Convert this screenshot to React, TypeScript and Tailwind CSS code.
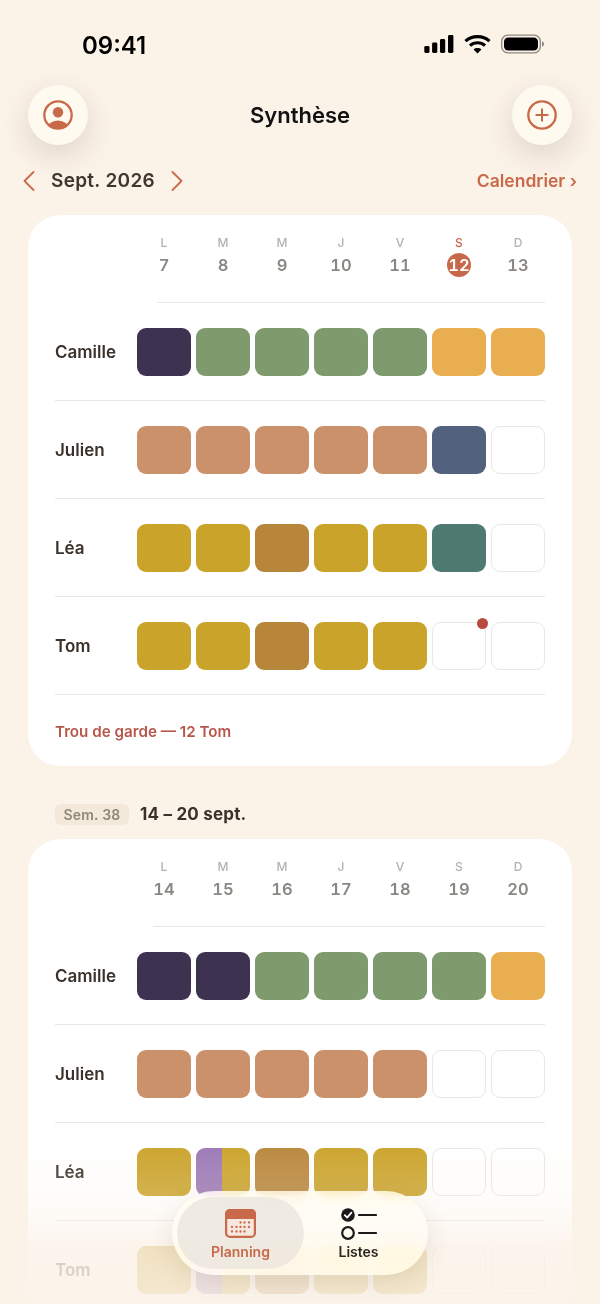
import React from "react";

type Slot = string | null;

const NAVY = "bg-[#3d3350]";
const GREEN = "bg-[#7f9a6c]";
const AMBER = "bg-[#e8ae4f]";
const TAN = "bg-[#cb916b]";
const SLATE = "bg-[#52617e]";
const GOLD = "bg-[#caa32a]";
const BROWN = "bg-[#b8863a]";
const TEAL = "bg-[#4e7a72]";

const font = { fontFamily: 'Inter, "Liberation Sans", sans-serif' };

type Row = { name: string; cells: (Slot | "split")[]; alert?: number };

const firstWeek: Row[] = [
  { name: "Camille", cells: [NAVY, GREEN, GREEN, GREEN, GREEN, AMBER, AMBER] },
  { name: "Julien", cells: [TAN, TAN, TAN, TAN, TAN, SLATE, null] },
  { name: "Léa", cells: [GOLD, GOLD, BROWN, GOLD, GOLD, TEAL, null] },
  { name: "Tom", cells: [GOLD, GOLD, BROWN, GOLD, GOLD, null, null], alert: 5 },
];

const secondWeek: Row[] = [
  { name: "Camille", cells: [NAVY, NAVY, GREEN, GREEN, GREEN, GREEN, AMBER] },
  { name: "Julien", cells: [TAN, TAN, TAN, TAN, TAN, null, null] },
  { name: "Léa", cells: [GOLD, "split", BROWN, GOLD, GOLD, null, null] },
  { name: "Tom", cells: [GOLD, "split", BROWN, GOLD, GOLD, null, null] },
];

const letters = ["L", "M", "M", "J", "V", "S", "D"];

function DayHeader({ start, today, rule }: { start: number; today?: number; rule: string }) {
  return (
    <div>
      <div className="ml-[82px] grid grid-cols-7 gap-[5px] pt-[21px]">
        {letters.map((l, i) => {
          const n = start + i;
          const isToday = n === today;
          return (
            <div key={i} className="flex flex-col items-center">
              <span className={`h-[14px] text-[12px] leading-[14px] font-medium ${isToday ? "text-[#c8684a]" : "text-[#b5b2ae]"}`}>{l}</span>
              <span className={`mt-[3px] flex h-[24px] w-[24px] items-center justify-center rounded-full text-[16.5px] leading-none font-semibold tabular-nums ${isToday ? "bg-[#c8684a] text-white" : "text-[#8b8884]"}`}>{n}</span>
            </div>
          );
        })}
      </div>
      <div className={`mt-[25px] h-px bg-[#e9e8e6] ${rule}`} />
    </div>
  );
}

function Cell({ value, alert }: { value: Slot | "split"; alert?: boolean }) {
  if (value === "split") {
    return (
      <div className="flex h-[48px] overflow-hidden rounded-[9px]">
        <div className="w-[26px] bg-[#9b78b6]" />
        <div className={`flex-1 ${GOLD}`} />
      </div>
    );
  }
  if (!value) {
    return (
      <div className="relative h-[48px] rounded-[9px] border-[1.5px] border-[#e8e7e5] bg-white">
        {alert && <span className="absolute -top-[5px] right-[-3px] h-[11px] w-[11px] rounded-full bg-[#b84c3f]" />}
      </div>
    );
  }
  return <div className={`h-[48px] rounded-[9px] ${value}`} />;
}

function PlanningRow({ row }: { row: Row }) {
  return (
    <div className="border-b border-[#e9e8e6] pt-[25px] pb-[24px]">
      <div className="flex items-center">
        <span className="w-[82px] pt-[2px] text-[17px] font-semibold text-[#3a312a]">{row.name}</span>
        <div className="grid flex-1 grid-cols-7 gap-[5px]">
          {row.cells.map((c, i) => (
            <Cell key={i} value={c} alert={row.alert === i} />
          ))}
        </div>
      </div>
    </div>
  );
}

function ProfileIcon() {
  return (
    <svg width="30" height="30" viewBox="0 0 30 30">
      <defs>
        <clipPath id="ring">
          <circle cx="15" cy="15" r="13.5" />
        </clipPath>
      </defs>
      <circle cx="15" cy="15" r="13.7" fill="none" stroke="#c8694a" strokeWidth="2.3" />
      <circle cx="15" cy="12.3" r="5.2" fill="#c8694a" />
      <ellipse cx="15" cy="29" rx="11" ry="8.6" fill="#c8694a" clipPath="url(#ring)" />
    </svg>
  );
}

function PlusIcon() {
  return (
    <svg width="30" height="30" viewBox="0 0 30 30" fill="none" stroke="#c8694a" strokeWidth="2.3" strokeLinecap="round">
      <circle cx="15" cy="15" r="13.7" />
      <path d="M15 9.3v11.4M9.3 15h11.4" strokeWidth="2" />
    </svg>
  );
}

function Chevron({ flip }: { flip?: boolean }) {
  return (
    <svg width="12" height="20" viewBox="0 0 12 20" fill="none" stroke="#c8694a" strokeWidth="1.8" strokeLinecap="round" strokeLinejoin="round">
      <path d={flip ? "M1.5 1 10.5 10 1.5 19" : "M10.5 1 1.5 10 10.5 19"} />
    </svg>
  );
}

function StatusIcons() {
  return (
    <div className="flex items-center">
      <svg width="30" height="20" viewBox="0 0 30 20" fill="#000">
        <rect x="0.3" y="12" width="5.2" height="7" rx="1.4" />
        <rect x="8.1" y="8.5" width="5.2" height="10.5" rx="1.4" />
        <rect x="16" y="5" width="5.2" height="14" rx="1.4" />
        <rect x="24" y="1" width="5.4" height="18" rx="1.4" />
      </svg>
      <svg className="ml-[10px]" width="27" height="20" viewBox="0 0 27 20" fill="none" stroke="#000" strokeWidth="3.2">
        <path d="M1.5 7.2C8 1 19 1 25.5 7.2" />
        <path d="M6 11.6c4.2-3.8 10.8-3.8 15 0" />
        <path d="M13.5 19.5 9.6 15.4c2.2-1.8 5.6-1.8 7.8 0z" fill="#000" stroke="none" />
      </svg>
      <svg className="ml-[10px]" width="43" height="20" viewBox="0 0 43 20">
        <rect x="0.7" y="1.2" width="38.6" height="17.6" rx="6" fill="none" stroke="#8c8780" strokeWidth="1.3" />
        <rect x="3" y="3.4" width="34" height="13.2" rx="4.2" fill="#000" />
        <path d="M41 7.2c1.2.4 2 1.5 2 2.8s-.8 2.4-2 2.8z" fill="#8c8780" />
      </svg>
    </div>
  );
}

function CalendarIcon() {
  return (
    <svg width="31" height="29" viewBox="0 0 31 29">
      <rect x="1.1" y="1.1" width="28.8" height="26.8" rx="4" fill="#f6e8df" stroke="#c8694a" strokeWidth="2.2" />
      <path d="M0 10V5a5 5 0 0 1 5-5h21a5 5 0 0 1 5 5v5z" fill="#c8694a" />
      <g fill="#c8694a">
        {[13.5, 18, 22.5].map((y, r) =>
          [7, 11.5, 15.5, 19.5, 24].map((x, c) =>
            (r === 0 && c < 2) || (r === 2 && c === 4) ? null : <circle key={`${r}-${c}`} cx={x} cy={y} r="1.15" />
          )
        )}
      </g>
    </svg>
  );
}

function ListIcon() {
  return (
    <svg width="36" height="34" viewBox="0 0 36 34" fill="none">
      <circle cx="7" cy="7" r="6.8" fill="#1a1a1a" />
      <path d="M3.8 7.2 6.2 9.6 10.4 4.6" stroke="#fff" strokeWidth="1.8" strokeLinecap="round" strokeLinejoin="round" />
      <circle cx="7" cy="25" r="5.8" stroke="#1a1a1a" strokeWidth="2.2" />
      <path d="M18 7h17M18 25h17" stroke="#1a1a1a" strokeWidth="2.2" strokeLinecap="round" />
    </svg>
  );
}

export default function App() {
  return (
    <div className="relative h-[1304px] w-[600px] overflow-hidden bg-[#fbf2e8]" style={font}>
      <div className="flex h-[85px] items-start justify-between pt-[30px] pr-[56px] pl-[82px]">
        <span className="text-[24px] leading-[32px] font-semibold text-black">09:41</span>
        <div className="pt-[4px]">
          <StatusIcons />
        </div>
      </div>

      <div className="flex items-center justify-between px-7">
        <div className="flex h-[60px] w-[60px] items-center justify-center rounded-full bg-[#fefaf0] shadow-[0_10px_28px_rgba(90,70,50,0.17)]">
          <ProfileIcon />
        </div>
        <span className="text-[22px] font-semibold text-[#111]">Synthèse</span>
        <div className="flex h-[60px] w-[60px] items-center justify-center rounded-full bg-[#fefaf0] shadow-[0_10px_28px_rgba(90,70,50,0.17)]">
          <PlusIcon />
        </div>
      </div>

      <div className="mt-[22px] flex h-[28px] items-center justify-between pr-[23px] pl-[23px]">
        <div className="flex items-center">
          <Chevron />
          <span className="mx-[16px] text-[19px] font-semibold tracking-[0.3px] text-[#3f362e]">Sept. 2026</span>
          <Chevron flip />
        </div>
        <span className="text-[17.5px] font-semibold text-[#c8694a]">Calendrier ›</span>
      </div>

      <section className="mx-7 mt-[20px] h-[551px] rounded-[32px] bg-white px-[27px]">
        <DayHeader start={7} today={12} rule="ml-[102px]" />
        {firstWeek.map((r) => (
          <PlanningRow key={r.name} row={r} />
        ))}
        <p className="mt-[27px] text-[15.2px] leading-[20px] font-semibold text-[#b8564a]">Trou de garde — 12 Tom</p>
      </section>

      <div className="mt-[38px] flex h-[21px] items-center pl-[55px]">
        <span className="flex h-[21px] w-[74px] items-center justify-center rounded-[6px] bg-[#f3e8da] text-[14px] font-semibold tracking-[0.2px] text-[#8f8779]">Sem. 38</span>
        <span className="ml-[11px] text-[17px] font-bold tracking-[0.2px] text-[#3a312a]">14 – 20 sept.</span>
      </div>

      <section className="mx-7 mt-[14px] rounded-[32px] bg-white px-[27px]">
        <DayHeader start={14} rule="ml-[98px]" />
        {secondWeek.map((r) => (
          <PlanningRow key={r.name} row={r} />
        ))}
      </section>

      {/* Content dissolves into the page colour behind the tab bar */}
      <div className="pointer-events-none absolute inset-x-0 bottom-0 h-[170px] bg-[linear-gradient(to_bottom,#fbf2e800_0%,#fbf2e833_38%,#fbf2e8cc_68%,#fbf2e8e0_100%)]" />

      <nav className="absolute top-[1191px] left-[172px] flex h-[84px] w-[256px] items-center rounded-[42px] bg-[#fffcf5cc] p-[5px] shadow-[0_6px_24px_rgba(90,70,50,0.12)] backdrop-blur-[6px] backdrop-saturate-[2.5]">
        <div className="flex h-[72px] w-[127px] flex-col items-center justify-center rounded-[36px] bg-[#ece8df]/85 pt-[3px]">
          <CalendarIcon />
          <span className="mt-[6px] text-[14px] leading-[16px] font-semibold text-[#c8694a]">Planning</span>
        </div>
        <div className="flex flex-1 flex-col items-center justify-center pt-[1px] pr-[10px]">
          <ListIcon />
          <span className="mt-[2px] text-[14px] leading-[16px] font-semibold text-[#2a2622]">Listes</span>
        </div>
      </nav>
    </div>
  );
}
